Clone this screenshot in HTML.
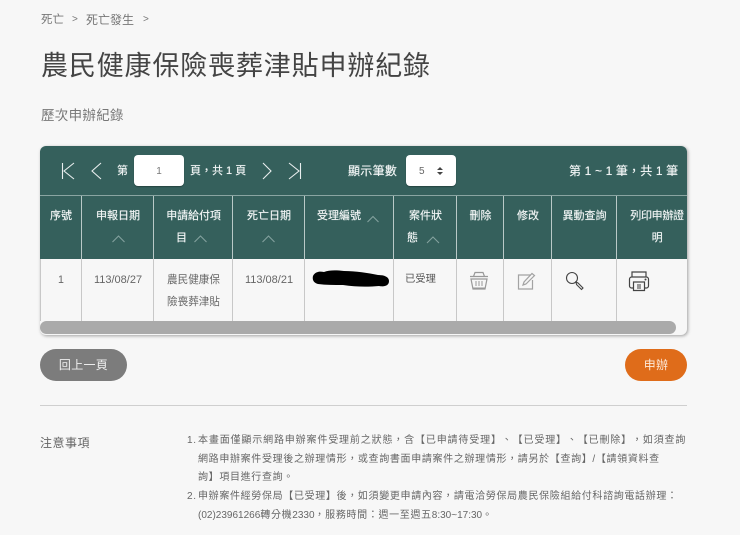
<!DOCTYPE html>
<html lang="zh-Hant"><head><meta charset="utf-8"><style>
html,body{margin:0;padding:0}
body{width:740px;height:535px;overflow:hidden;position:relative;background:#f7f7f7;font-family:"Liberation Sans","Noto Sans CJK TC",sans-serif;color:#555;text-spacing-trim:space-all}
.a{position:absolute;white-space:nowrap}
.th{position:absolute;color:#f0f4f4;font-size:11px;line-height:21.500px;text-align:center;top:206px;white-space:nowrap;text-shadow:0 0 .5px #f0f4f4}
.td{position:absolute;color:#666;font-size:10.600px;line-height:22px;text-align:center;top:269px;white-space:nowrap}
.tb{color:#f0f4f4;font-size:11px;text-shadow:0 0 .5px #f0f4f4}
.note{font-size:10px;letter-spacing:.66px;color:#666;line-height:18.600px}
.n{letter-spacing:0}
</style></head><body>
<div class="a" style="left:41px;top:12px;font-size:11.500px;color:#777;line-height:16px">死亡</div>
<div class="a" style="left:72px;top:12px;font-size:10px;color:#777;line-height:16px">&gt;</div>
<div class="a" style="left:86px;top:12px;font-size:12px;color:#777;line-height:16px">死亡發生</div>
<div class="a" style="left:143px;top:12px;font-size:10px;color:#777;line-height:16px">&gt;</div>
<div class="a" style="left:41px;top:48px;font-size:27px;letter-spacing:.85px;line-height:36px;color:#444">農民健康保險喪葬津貼申辦紀錄</div>
<div class="a" style="left:41px;top:107px;font-size:13.500px;letter-spacing:.3px;line-height:18px;color:#777">歷次申辦紀錄</div>

<!-- panel -->
<div class="a" style="left:40px;top:146px;width:647px;height:189px;border-radius:6px;background:#f7f7f7;box-shadow:1px 1px 3px rgba(0,0,0,.35)"></div>
<div class="a" style="left:40px;top:146px;width:647px;height:113px;border-radius:6px 6px 0 0;background:#35605c"></div>
<div class="a" style="left:40px;top:195px;width:647px;height:1px;background:#8aa5a2"></div>

<svg class="a" style="left:40px;top:146px" width="300" height="50" fill="none" stroke="#e8eeee" stroke-width="1.100">
<path d="M22.500 17V33M34 17L24 25L34 33"/>
<path d="M61 17L52 25L61 33"/>
<path d="M223 17L231 25L223 33"/>
<path d="M249 17L259 25L249 33M260.500 17V33"/>
</svg>
<div class="a tb" style="left:117px;top:163px;line-height:16px">第</div>
<div class="a" style="left:134px;top:155px;width:50px;height:31px;background:#fff;border-radius:4px;box-shadow:0 1px 1px rgba(0,0,0,.3);text-align:center;font-size:10px;line-height:33px;color:#777">1</div>
<div class="a tb" style="left:190px;top:163px;line-height:16px">頁，共 1 頁</div>
<div class="a tb" style="left:348px;top:162px;line-height:18px;font-size:12px;letter-spacing:.3px">顯示筆數</div>
<div class="a" style="left:406px;top:155px;width:50px;height:31px;background:#fff;border-radius:4px;box-shadow:0 1px 1px rgba(0,0,0,.3);font-size:10px;line-height:33px;color:#666"><span style="position:absolute;left:13px">5</span></div>
<svg class="a" style="left:436px;top:166px" width="8" height="10" fill="#444"><path d="M1 4L4 1L7 4ZM1 6L4 9L7 6Z"/></svg>
<div class="a tb" style="left:569px;top:162px;line-height:18px;font-size:12px;letter-spacing:.15px">第 1 ~ 1 筆，共 1 筆</div>

<!-- header -->
<div class="th" style="left:40px;width:42px">序號</div>
<div class="th" style="left:82px;width:72px">申報日期</div>
<div class="th" style="left:154px;width:79px;letter-spacing:-.1px">申請給付項<br><span style="margin-right:24px">目</span></div>
<div class="th" style="left:233px;width:72px">死亡日期</div>
<div class="th" style="left:317px">受理編號</div>
<div class="th" style="left:394px;width:63px">案件狀<br><span style="margin-right:26px">態</span></div>
<div class="th" style="left:457px;width:47px">刪除</div>
<div class="th" style="left:504px;width:48px">修改</div>
<div class="th" style="left:552px;width:65px">異動查詢</div>
<div class="th" style="left:622px;width:70px;letter-spacing:-.3px">列印申辦證<br>明</div>
<svg class="a" style="left:40px;top:196px" width="647" height="63" fill="none" stroke="#86a3a0" stroke-width="1">
<path d="M72.500 46L78.500 40L84.500 46M154.500 46L160.500 40L166.500 46M222.500 46L228.500 40L234.500 46M327.500 26L333 20.500L338.500 26M387 47L393 41L399 47"/>
</svg>
<svg class="a" style="left:40px;top:196px" width="647" height="63" stroke="#b9c9c7" stroke-width="1" fill="none">
<path d="M41.500 0V63M113.500 0V63M192.500 0V63M264.500 0V63M353.500 0V63M416.500 0V63M463.500 0V63M511.500 0V63M576.500 0V63"/>
</svg>
<svg class="a" style="left:40px;top:259px" width="647" height="62" stroke="#c8c8c8" stroke-width="1" fill="none">
<path d="M.5 0V62M41.500 0V62M113.500 0V62M192.500 0V62M264.500 0V62M353.500 0V62M416.500 0V62M463.500 0V62M511.500 0V62M576.500 0V62"/>
</svg>

<!-- row -->
<div class="td" style="left:40px;width:42px">1</div>
<div class="td" style="left:82px;width:72px;font-size:11px">113/08/27</div>
<div class="td" style="left:154px;width:79px">農民健康保<br>險喪葬津貼</div>
<div class="td" style="left:233px;width:72px;font-size:11px">113/08/21</div>
<svg class="a" style="left:310px;top:267px" width="85" height="24"><path fill="#000" d="M3 9C5 5 9 4 14 5C19 3 26 3 34 4C46 4 58 6 68 8C74 8 79 10 79 14C79 19 74 20 69 19C58 20 46 20 33 18C24 18 16 18 8 17C4 16 2 13 3 9Z"/></svg>
<div class="td" style="left:405px;color:#555;font-size:10.300px">已受理</div>

<!-- icons -->
<svg class="a" style="left:468px;top:270px" width="22" height="22" fill="none" stroke="#999" stroke-width="1.200">
<path d="M2 6.500H20M5.500 6.500L7 2.500H15L16.500 6.500M3 9H19L17 19H5Z"/><path d="M8 11V16M11 11V16M14 11V16M5 18H17" stroke-width="1"/>
</svg>
<svg class="a" style="left:516px;top:271px" width="22" height="20" fill="none" stroke="#a3a3a3" stroke-width="1.200">
<path d="M15 4H2.500V18H16.500V9"/><path d="M7 14L8 11L16 2.500L18.500 4.500L10 13Z"/>
</svg>
<svg class="a" style="left:564px;top:271px" width="22" height="20" fill="none" stroke="#444" stroke-width="1.100">
<circle cx="8" cy="7" r="5.500"/><path d="M12 11L14 12L19 17L17.500 18.500L12.500 13.500Z"/>
</svg>
<svg class="a" style="left:628px;top:270px" width="22" height="22" fill="none" stroke="#444" stroke-width="1.200">
<path d="M4 7V2H18V7M5.500 18H3.500C2.500 18 1.500 17 1.500 16V9C1.500 8 2.500 7 3.500 7H18.500C19.500 7 20.500 8 20.500 9V16C20.500 17 19.500 18 18.500 18H16.500M5.500 12H16.500V20.500H5.500Z"/><path d="M9 14H13V19H9Z" fill="#999" stroke="none"/><circle cx="17.500" cy="9.500" r="1" fill="#444" stroke="none"/>
</svg>

<!-- scrollbar -->
<div class="a" style="left:40px;top:321px;width:636px;height:13px;border-radius:7px;background:#aaa"></div>

<!-- buttons -->
<div class="a" style="left:40px;top:349px;width:87px;height:32px;border-radius:16px;background:#7c7c7c;color:#eee;text-align:center;font-size:12px;line-height:32px;letter-spacing:.3px">回上一頁</div>
<div class="a" style="left:625px;top:349px;width:62px;height:32px;border-radius:16px;background:#df6c1a;color:#fde9d8;text-align:center;font-size:12px;line-height:32px;letter-spacing:.3px">申辦</div>
<div class="a" style="left:40px;top:405px;width:647px;height:1px;background:#cfcfcf"></div>

<!-- notes -->
<div class="a" style="left:40px;top:434px;font-size:12px;line-height:18px;color:#666;letter-spacing:.5px">注意事項</div>
<div class="a note" style="left:187px;top:432px">1.</div>
<div class="a note" style="left:198px;top:432px"><span style="letter-spacing:.85px">本畫面僅顯示網路申辦案件受理前之狀態，含【已申請待受理】、【已受理】、【已刪除】，如須查詢</span><br>網路申辦案件受理後之辦理情形，或查詢書面申請案件之辦理情形，請另於【查詢】/【請領資料查<br>詢】項目進行查詢。</div>
<div class="a note" style="left:187px;top:488px">2.</div>
<div class="a note" style="left:198px;top:488px">申辦案件經勞保局【已受理】後，如須變更申請內容，請電洽勞保局農民保險組給付科諮詢電話辦理：<br><span class="n">(02)23961266</span>轉分機<span class="n">2330</span>，服務時間：週一至週五<span class="n">8:30~17:30</span>。</div>
</body></html>
